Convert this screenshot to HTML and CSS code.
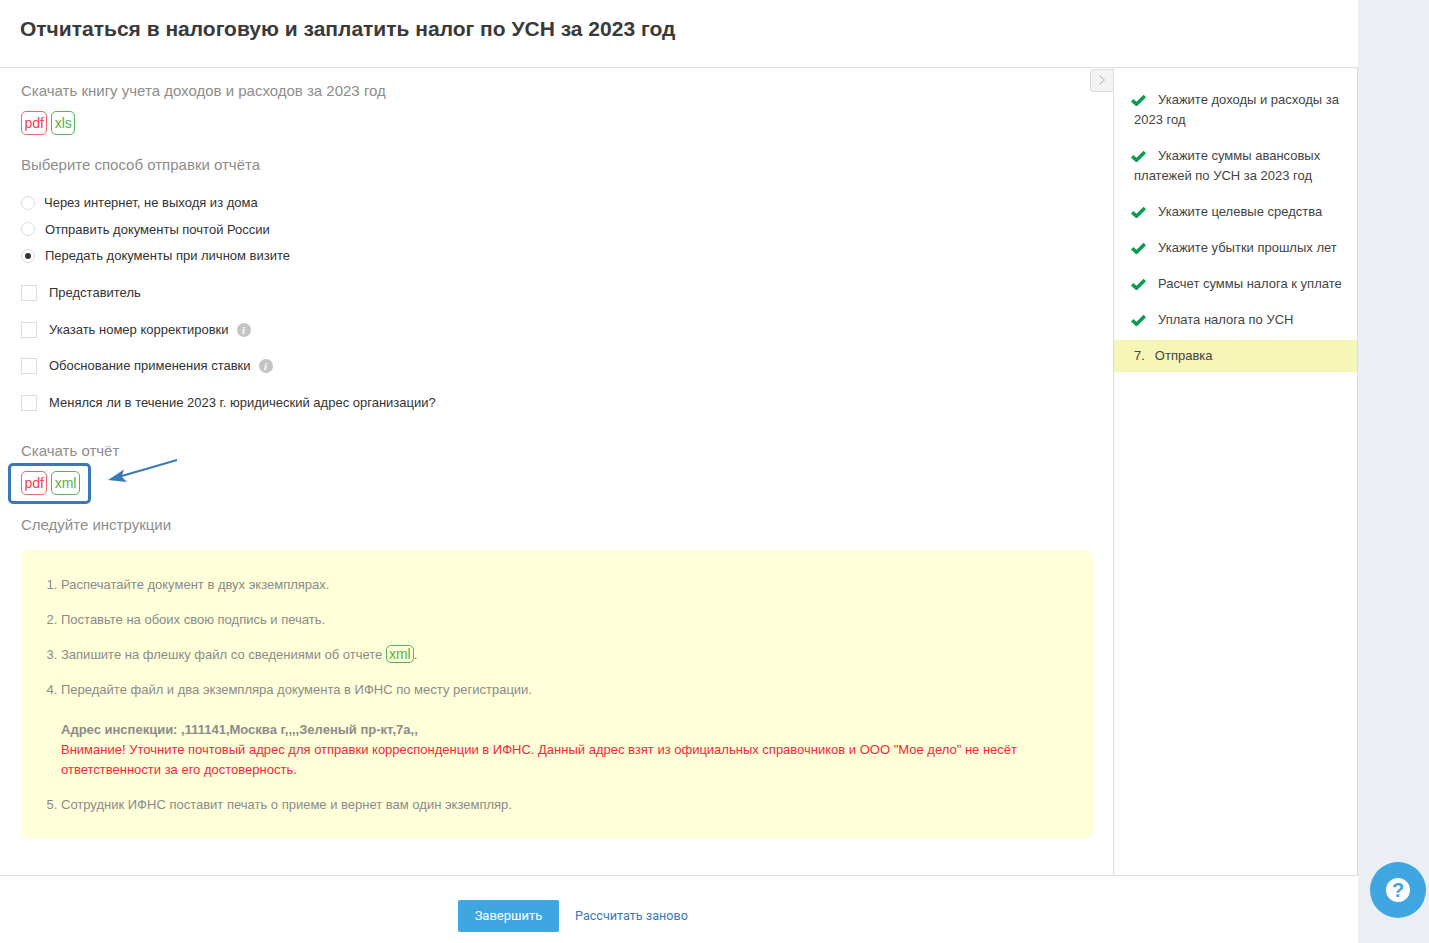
FILE: index.html
```html
<!DOCTYPE html>
<html lang="ru">
<head>
<meta charset="utf-8">
<title>Отчитаться в налоговую</title>
<link rel="stylesheet" href="styles.css">
</head>
<body>
<div class="page">
  <div class="app">
    <header class="header"><h1>Отчитаться в налоговую и заплатить налог по УСН за 2023 год</h1></header>
    <div class="body">
      <main class="main">
        <button class="collapse" aria-label="Свернуть"><svg width="8" height="10" viewBox="0 0 8 10"><path d="M1.500 .8 6.500 5 1.500 9.200" fill="none" stroke="#aaa" stroke-width="1"/></svg></button>
        <h2 class="heading first">Скачать книгу учета доходов и расходов за 2023 год</h2>
        <div class="tags"><span class="tag pdf">pdf</span><span class="tag green">xls</span></div>
        <h2 class="heading method">Выберите способ отправки отчёта</h2>
        <div class="radios">
          <div class="radio r1"><span class="dot"></span>Через интернет, не выходя из дома</div>
          <div class="radio"><span class="dot"></span>Отправить документы почтой России</div>
          <div class="radio"><span class="dot on"></span>Передать документы при личном визите</div>
        </div>
        <div class="checks">
          <div class="check"><span class="box"></span>Представитель</div>
          <div class="check"><span class="box"></span>Указать номер корректировки<span class="info">i</span></div>
          <div class="check"><span class="box"></span>Обоснование применения ставки<span class="info">i</span></div>
          <div class="check"><span class="box"></span>Менялся ли в течение 2023 г. юридический адрес организации?</div>
        </div>
        <h2 class="heading report">Скачать отчёт</h2>
        <div class="tags report-tags">
          <span class="tag pdf">pdf</span><span class="tag green">xml</span>
          <span class="frame"></span>
          <svg class="arrow" width="76" height="28" viewBox="0 0 76 28"><path d="M70 1 13 17.500" fill="none" stroke="#3b78b8" stroke-width="2"/><path d="M1 21 17 10.500 14.500 17.500 20 23Z" fill="#3b78b8"/></svg>
        </div>
        <h2 class="heading follow">Следуйте инструкции</h2>
        <section class="note">
          <ol>
            <li>Распечатайте документ в двух экземплярах.</li>
            <li>Поставьте на обоих свою подпись и печать.</li>
            <li>Запишите на флешку файл со сведениями об отчете <span class="tag green small">xml</span>.</li>
            <li>Передайте файл и два экземпляра документа в ИФНС по месту регистрации.
              <div class="address"><b>Адрес инспекции: ,111141,Москва г,,,,Зеленый пр-кт,7а,,</b><br><span class="warn">Внимание! Уточните почтовый адрес для отправки корреспонденции в ИФНС. Данный адрес взят из официальных справочников и ООО "Мое дело" не несёт ответственности за его достоверность.</span></div>
            </li>
            <li>Сотрудник ИФНС поставит печать о приеме и вернет вам один экземпляр.</li>
          </ol>
        </section>
      </main>
      <nav class="steps">
        <div class="step"><svg class="tick" width="15" height="12" viewBox="0 0 15 12"><path d="M1.200 6.200 5.500 10.300 13.800 2" fill="none" stroke="#0d9b4d" stroke-width="3.400"/></svg>Укажите доходы и расходы за 2023 год</div>
        <div class="step"><svg class="tick" width="15" height="12" viewBox="0 0 15 12"><path d="M1.200 6.200 5.500 10.300 13.800 2" fill="none" stroke="#0d9b4d" stroke-width="3.400"/></svg>Укажите суммы авансовых платежей по УСН за 2023 год</div>
        <div class="step"><svg class="tick" width="15" height="12" viewBox="0 0 15 12"><path d="M1.200 6.200 5.500 10.300 13.800 2" fill="none" stroke="#0d9b4d" stroke-width="3.400"/></svg>Укажите целевые средства</div>
        <div class="step"><svg class="tick" width="15" height="12" viewBox="0 0 15 12"><path d="M1.200 6.200 5.500 10.300 13.800 2" fill="none" stroke="#0d9b4d" stroke-width="3.400"/></svg>Укажите убытки прошлых лет</div>
        <div class="step"><svg class="tick" width="15" height="12" viewBox="0 0 15 12"><path d="M1.200 6.200 5.500 10.300 13.800 2" fill="none" stroke="#0d9b4d" stroke-width="3.400"/></svg>Расчет суммы налога к уплате</div>
        <div class="step"><svg class="tick" width="15" height="12" viewBox="0 0 15 12"><path d="M1.200 6.200 5.500 10.300 13.800 2" fill="none" stroke="#0d9b4d" stroke-width="3.400"/></svg>Уплата налога по УСН</div>
        <div class="step current"><span class="num">7.</span>Отправка</div>
      </nav>
    </div>
    <footer class="footer">
      <button class="finish">Завершить</button>
      <a class="again" href="#">Рассчитать заново</a>
    </footer>
  </div>
  <aside class="rail">
    <button class="help" aria-label="Помощь"><span class="help-inner">?</span></button>
  </aside>
</div>
</body>
</html>
```
FILE: styles.css
```css
* { box-sizing: border-box; }
html, body { margin: 0; height: 100%; }
body { font-family: "Liberation Sans", Arial, sans-serif; font-size: 13px; color: #333; background: #ebeff3; overflow: hidden; }
.page { display: flex; width: 1429px; height: 943px; }
.app { width: 1358px; height: 943px; background: #fff; display: flex; flex-direction: column; }
.rail { width: 71px; position: relative; }
.header { height: 68px; border-bottom: 1px solid #ddd; padding: 16px 0 0 20px; }
.header h1 { margin: 0; font: 700 21px/26px "Liberation Sans", Arial, sans-serif; color: #3a3a3a; }
.body { height: 808px; display: flex; border-right: 1px solid #ddd; border-bottom: 1px solid #ddd; }
.main { position: relative; width: 1113px; padding: 13px 0 0 21px; }
.collapse { position: absolute; top: 1px; right: 0; width: 23px; height: 23px; padding: 0 0 2px; border: 1px solid #ddd; border-right: 0; border-radius: 4px 0 0 4px; background: #f3f3f3; display: flex; align-items: center; justify-content: center; }
.heading { margin: 0; font: 400 15px/20px "Liberation Sans", Arial, sans-serif; color: #8d8d8d; }
.tags { position: relative; display: flex; gap: 4px; height: 24px; margin-top: 10px; }
.tag { display: inline-block; height: 24px; padding: 0 2.400px; font-size: 14px; line-height: 22px; border: 1px solid; border-radius: 5px; }
.pdf { color: #f2414f; border-color: #f2626e; }
.green { color: #55b24a; border-color: #55b25e; }
.method { margin-top: 20px; }
.radios { margin-top: 14.400px; height: 79px; }
.radio { display: flex; align-items: center; height: 26.500px; color: #333; }
.r1 .dot { margin-right: 9px; }
.dot { width: 14px; height: 14px; margin-right: 10px; border: 1px solid #ddd; border-radius: 50%; background: #fff; flex: none; position: relative; }
.dot.on::after { content: ""; position: absolute; left: 3px; top: 3px; width: 6px; height: 6px; background: #333; border-radius: 50%; }
.checks { margin-top: 6.700px; }
.check { display: flex; align-items: center; height: 36.500px; line-height: 16px; }
.box { width: 16px; height: 16px; margin-right: 12px; border: 1px solid #ddd; background: #fff; flex: none; }
.info { width: 14px; height: 14px; margin-left: 8px; border-radius: 50%; background: #c4c4c4; color: #fff; font: italic 700 11px/14px "Liberation Serif", serif; text-align: center; }
.report { margin-top: 20px; }
.report-tags { margin-top: 10px; }
.frame { position: absolute; left: -13px; top: -8px; width: 83px; height: 41px; border: 3px solid #3b78b8; border-radius: 5px; }
.arrow { position: absolute; left: 86px; top: -12px; }
.follow { margin-top: 20px; }
.note { width: 1072px; height: 289px; margin-top: 15px; padding: 25px 26px 0 0; background: #ffffd9; border-radius: 8px; color: #8b8b8b; font-size: 13px; line-height: 20px; }
.note ol { margin: 0; padding: 0 0 0 40px; }
.note li { margin-bottom: 15px; }
.note li::marker { color: #8b8b8b; }
.small { height: 18px; padding: 0 2px; font-size: 14px; line-height: 16px; vertical-align: baseline; }
.address { margin-top: 20px; }
.address b { color: #8b8b8b; }
.warn { color: #f2293b; }
.steps { flex: 1; border-left: 1px solid #ddd; padding-top: 20px; color: #444; font-size: 13px; line-height: 20px; }
.step { padding: 2px 12px 2px 20px; margin-bottom: 12px; }
.tick { margin: 0 12px 0 -3px; vertical-align: -2px; }
.current { margin-top: -4px; padding: 6px 16px 6px 20px; background: #f6f6b8; }
.num { margin-right: 10px; }
.footer { flex: 1; padding: 24px 0 0 458px; display: flex; align-items: flex-start; gap: 16px; }
.finish { width: 101px; height: 32px; border: 0; border-radius: 2px; background: #3fa6e1; color: #fff; font: 400 13px/32px Roboto, sans-serif; padding: 0; }
.again { font: 400 12.600px/32px Roboto, sans-serif; color: #3b78b8; text-decoration: none; }
.help { position: absolute; left: 12px; top: 862px; width: 56px; height: 56px; padding: 0; border: 0; border-radius: 50%; background: #3fa6e1; display: flex; align-items: center; justify-content: center; }
.help-inner { width: 24px; height: 24px; border-radius: 50%; background: #fff; color: #3fa6e1; font: 700 20px/24px "Liberation Sans", sans-serif; text-align: center; }
```
